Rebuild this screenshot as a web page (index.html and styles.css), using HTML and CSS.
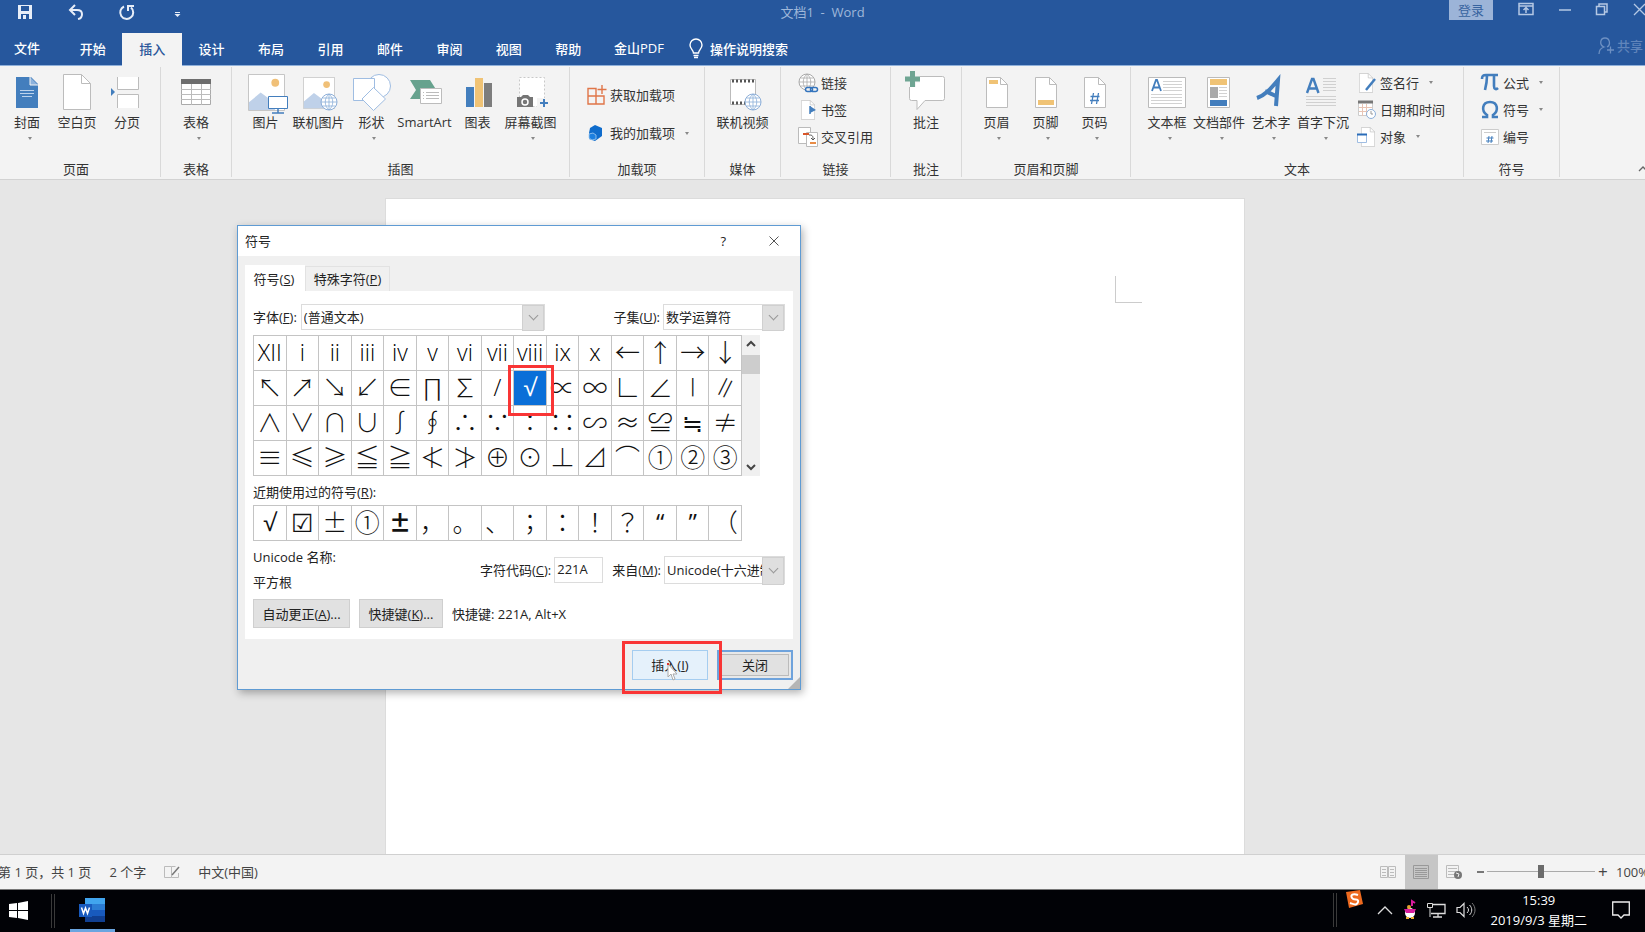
FILE: index.html
```html
<!DOCTYPE html>
<html lang="zh-CN">
<head>
<meta charset="utf-8">
<title>文档1 - Word</title>
<link rel="stylesheet" href="styles.css">
</head>
<body>
<svg class="defs" aria-hidden="true">
  <symbol id="page" viewBox="0 0 22 31"><path d="M.5.5h14l7 7v23H.5z" fill="#fff" stroke="#bcbcbc"/><path d="M14.500 .5v7h7" fill="none" stroke="#bcbcbc"/></symbol>
  <symbol id="globe" viewBox="0 0 18 18"><circle cx="9" cy="9" r="8" fill="#fff" stroke="currentColor"/><path d="M9 1v16M1 9h16M2.500 5h13M2.500 13h13M9 1c-5 4-5 12 0 16M9 1c5 4 5 12 0 16" fill="none" stroke="currentColor" stroke-width=".8"/></symbol>
  <symbol id="landscape" viewBox="0 0 38 38"><path d="M.5.5h37v37H.5z" fill="#fff" stroke="#c4c4c4"/><path d="M1 29l12-10 8 6 7 12H1z" fill="#bfd1e9"/><circle cx="28" cy="9" r="4" fill="#f0c078"/></symbol>
</svg>
<div class="app">
  <header class="titlebar">
    <div class="quick">
      <button aria-label="保存"><svg width="16" height="16"><path d="M1 1h14v14H1z" fill="#e8eef8"/><path d="M4 2h8v5H4zM4 10h8v5H4z" fill="#26579d"/><path d="M6 11h3v4H6z" fill="#e8eef8"/></svg></button>
      <button aria-label="撤消"><svg width="16" height="16"><path d="M2 6h7c7 0 6 8 1 9" fill="none" stroke="#e8eef8" stroke-width="2"/><path d="M7 1L2 6l5 5" fill="none" stroke="#e8eef8" stroke-width="2"/></svg></button>
      <button aria-label="重复"><svg width="16" height="16"><path d="M5 2.500A6.500 6.500 0 1 0 12 3.500" fill="none" stroke="#e8eef8" stroke-width="2"/><path d="M9 7V2h6" fill="none" stroke="#e8eef8" stroke-width="2"/></svg></button>
      <button aria-label="自定义"><svg width="16" height="16"><path d="M5 8.500h5" stroke="#e8eef8"/><path d="M4.500 10h6l-3 3z" fill="#e8eef8"/></svg></button>
    </div>
    <div class="doc-title">文档1&nbsp; - &nbsp;Word</div>
    <div class="window-tools">
      <button class="login">登录</button>
      <button aria-label="功能区显示选项"><svg width="16" height="14"><path d="M1 1.500h14v11H1zM1 4h14M8 11V6M5.500 8L8 5.500 10.500 8" fill="none" stroke="#b5c8e4" stroke-width="1.500"/></svg></button>
      <button aria-label="最小化"><svg width="12" height="14"><path d="M0 8h12" stroke="#b5c8e4" stroke-width="1.500"/></svg></button>
      <button aria-label="还原"><svg width="12" height="14"><path d="M.5 4.500h8v8h-8zM3 4V2h8v8H9" fill="none" stroke="#b5c8e4" stroke-width="1.500"/></svg></button>
      <button aria-label="关闭窗口"><svg width="14" height="14"><path d="M1 2l11 11M12 2L1 13" stroke="#b5c8e4" stroke-width="1.300"/></svg></button>
    </div>
  </header>
  <nav class="tabs">
    <button class="file">文件</button>
    <div class="tab-grid">
      <button>开始</button><button class="active">插入</button><button>设计</button><button>布局</button><button>引用</button><button>邮件</button><button>审阅</button><button>视图</button><button>帮助</button>
    </div>
    <button class="pdf">金山PDF</button>
    <button class="tell"><svg width="14" height="20"><path d="M4.500 14c0-3-3.500-4-3.500-8a6 6 0 0 1 12 0c0 4-3.500 5-3.500 8z" fill="none" stroke="#fff" stroke-width="1.400"/><path d="M4.500 16.500h5M5 18.500h4" stroke="#fff" stroke-width="1.300"/></svg>操作说明搜索</button>
    <button class="share"><svg width="17" height="18"><path d="M1 17c0-4 2-6 5-7-5-2-4-9 1-9s6 7 2 9M9 13h7M12.500 9.500v7" fill="none" stroke="#6d90c2" stroke-width="1.300"/></svg>共享</button>
  </nav>

  <section class="ribbon" aria-label="插入">
    <div class="group g-pages">
      <div class="items">
        <button class="big"><svg width="40" height="42"><path d="M9 5h15l7 7v24H9z" fill="#437ebd"/><path d="M23 5v8h8" fill="#8db2dc" stroke="#f3f3f3"/><path d="M13 18.500h14M13 21.500h14M15 24.500h10" stroke="#bdd3ec"/></svg><span>封面</span><i class="arrow"></i></button>
        <button class="big"><svg width="40" height="42"><path d="M6.500 2.500h18l9 9v26h-27z" fill="#fff" stroke="#bcbcbc"/><path d="M24.500 2.500v9h9" fill="none" stroke="#bcbcbc"/></svg><span>空白页</span></button>
        <button class="big"><svg width="40" height="42"><path d="M10.500 5v12.500h21V5M10.500 36V22.500h21V36" fill="#fff" stroke="#bcbcbc"/><path d="M4 16l4 4-4 4z" fill="#437ebd"/></svg><span>分页</span></button>
      </div>
      <div class="caption">页面</div>
    </div>
    <div class="group g-table">
      <div class="items">
        <button class="big"><svg width="40" height="42"><path d="M5.500 7.500h29v25h-29z" fill="#fff" stroke="#aaa"/><path d="M5 7h30v5H5z" fill="#6e6e6e"/><path d="M5 17.500h30M5 22.500h30M5 27.500h30M15.500 12v21M25.500 12v21" stroke="#bbb"/></svg><span>表格</span><i class="arrow"></i></button>
      </div>
      <div class="caption">表格</div>
    </div>
    <div class="group g-illus">
      <div class="items">
        <button class="big"><svg width="40" height="42"><use href="#landscape" x="2" y="2" width="37" height="37"/><path d="M22.500 24.500h19v12h-19z" fill="#fff" stroke="#437ebd"/><path d="M32 37v4M26 41h12" stroke="#437ebd" stroke-width="1.500"/></svg><span>图片</span></button>
        <button class="big"><svg width="40" height="42"><use href="#landscape" x="4" y="5" width="32" height="32"/><use href="#globe" x="21" y="21" width="18" height="18" color="#8caed8"/></svg><span>联机图片</span></button>
        <button class="big"><svg width="40" height="42"><circle cx="27" cy="14" r="11.500" fill="#fff" stroke="#9fbde2"/><path d="M1.500 6.500h21v22h-21z" fill="#fff" stroke="#9fbde2"/><path d="M21.500 15.500l12 11.500-12 11.500L10 27z" fill="#fff" stroke="#9fbde2"/></svg><span>形状</span><i class="arrow"></i></button>
        <button class="big"><svg width="40" height="42"><path d="M5 8h20l7 11-7 8H5l6-9z" fill="#67a28e"/><path d="M15.500 16.500h21v15h-21z" fill="#fff" stroke="#bcbcbc"/><path d="M18 20.500h1M21 20.500h13M18 23.500h1M21 23.500h13M18 26.500h1M21 26.500h13" stroke="#bbb"/></svg><span>SmartArt</span></button>
        <button class="big"><svg width="40" height="42"><path d="M8 15h8v20H8z" fill="#437ebd"/><path d="M17 6h8v29h-8z" fill="#f0c375"/><path d="M26 11h8v24h-8z" fill="#7d7d7d"/></svg><span>图表</span></button>
        <button class="big"><svg width="40" height="42"><path d="M8.500 5.500h25v29h-25z" fill="#fff" stroke="#c8c8c8" stroke-dasharray="2 2"/><path d="M6 25h4l2-2h5l2 2h3v10H6z" fill="#757575"/><circle cx="14" cy="30" r="3" fill="none" stroke="#fff" stroke-width="1.500"/><path d="M26 26h15v10H26z" fill="#f3f3f3"/><path d="M29 31h8M33 27v8" stroke="#437ebd" stroke-width="2"/></svg><span>屏幕截图</span><i class="arrow"></i></button>
      </div>
      <div class="caption">插图</div>
    </div>
    <div class="group g-addins">
      <div class="items small-list addins">
        <button class="small"><svg width="20" height="20"><path d="M1 3.500h8v7.500H1zM1 11h8v8H1zM9 11h8v8H9zM15 0v9M10.500 4.500h9" fill="none" stroke="#e07548" stroke-width="1.400"/></svg>获取加载项</button>
        <button class="small"><svg width="20" height="20"><path d="M8 2l7 3v8l-7 5-6-2v-6l1-5z" fill="#0f6ccc"/><path d="M2 11l4-1 3 2v4l-4 1-3-2z" fill="#1b7fe0" stroke="#a5cbf0" stroke-width=".8"/></svg>我的加载项<i class="arrow"></i></button>
      </div>
      <div class="caption">加载项</div>
    </div>
    <div class="group g-media">
      <div class="items">
        <button class="big"><svg width="40" height="42"><path d="M7.500 7.500h25v25h-25z" fill="#fff" stroke="#bbb"/><path d="M9 9h24M9 31h24" stroke="#555" stroke-width="3" stroke-dasharray="2 2"/><use href="#globe" x="21" y="21" width="18" height="18" color="#8caed8"/></svg><span>联机视频</span></button>
      </div>
      <div class="caption">媒体</div>
    </div>
    <div class="group g-links">
      <div class="items small-list">
        <button class="small"><svg width="20" height="20"><use href="#globe" x="0" y="0" width="18" height="18" color="#a9a9a9"/><path d="M7 14h13v6H7z" fill="#f3f3f3"/><rect x="7.500" y="14.500" width="7" height="4" rx="2" fill="none" stroke="#3474bd" stroke-width="1.500"/><rect x="12.500" y="14.500" width="7" height="4" rx="2" fill="none" stroke="#3474bd" stroke-width="1.500"/></svg>链接</button>
        <button class="small"><svg width="20" height="20"><use href="#page" x="3" y="0" width="14" height="20"/><path d="M12 6v8" stroke="#437ebd" stroke-width="1.500"/><path d="M12 6l6 4-6 3z" fill="#437ebd"/></svg>书签</button>
        <button class="small"><svg width="20" height="20"><path d="M.5.5h12v16H.5z" fill="#fff" stroke="#bbb"/><path d="M8.500 5.500h11v14h-11z" fill="#fff" stroke="#bbb"/><path d="M5 7h6" stroke="#d8562a" stroke-width="2"/><path d="M12 16h6" stroke="#e88c46" stroke-width="2"/><path d="M11 8c4 0 4 1 4 5m-2-2l2 2 2-2" fill="none" stroke="#555"/></svg>交叉引用</button>
      </div>
      <div class="caption">链接</div>
    </div>
    <div class="group g-comment">
      <div class="items">
        <button class="big"><svg width="40" height="42"><path d="M5.500 4.500h31a2 2 0 0 1 2 2v20a2 2 0 0 1-2 2H19l-8 9v-9H5.500a2 2 0 0 1-2-2v-20a2 2 0 0 1 2-2z" fill="#fff" stroke="#bcbcbc"/><path d="M-1 7h15M6.500-1v16" stroke="#f3f3f3" stroke-width="7"/><path d="M-1 7h15M6.500-1v16" stroke="#6fa593" stroke-width="5"/></svg><span>批注</span></button>
      </div>
      <div class="caption">批注</div>
    </div>
    <div class="group g-header">
      <div class="items">
        <button class="big"><svg width="40" height="42"><use href="#page" x="9" y="5" width="22" height="31"/><path d="M12 8h9v4h-9z" fill="#f0c375"/></svg><span>页眉</span><i class="arrow"></i></button>
        <button class="big"><svg width="40" height="42"><use href="#page" x="9" y="5" width="22" height="31"/><path d="M12 28h16v5H12z" fill="#f0c375"/></svg><span>页脚</span><i class="arrow"></i></button>
        <button class="big"><svg width="40" height="42"><use href="#page" x="9" y="5" width="22" height="31"/><path d="M18.500 21l-2 11M23.500 21l-2 11M15.500 24.500h9M15 28.500h9" stroke="#437ebd" stroke-width="1.300"/></svg><span>页码</span><i class="arrow"></i></button>
      </div>
      <div class="caption">页眉和页脚</div>
    </div>
    <div class="group g-text">
      <div class="items">
        <button class="big"><svg width="40" height="42"><path d="M1.500 5.500h37v30h-37z" fill="#fff" stroke="#bbb"/><path d="M16 9.500h19M16 12.500h19M16 15.500h19M16 18.500h19M4 22.500h31M4 25.500h31M4 28.500h31M4 31.500h31" stroke="#d2d2d2"/><path d="M5 19l4-11h1l4 11M6.500 15.500h6" fill="none" stroke="#437ebd" stroke-width="1.800"/></svg><span>文本框</span><i class="arrow"></i></button>
        <button class="big"><svg width="40" height="42"><path d="M8.500 5.500h22v30h-22z" fill="#fff" stroke="#bbb"/><path d="M11 7h17v6H11z" fill="#f0c375"/><path d="M11 15h8v11h-8z" fill="#aaa"/><path d="M20 15.500h8M20 18.500h8M20 21.500h8M20 24.500h8" stroke="#d2d2d2"/><path d="M11 28h17v6H11z" fill="#437ebd"/></svg><span>文档部件</span><i class="arrow"></i></button>
        <button class="big"><svg width="40" height="42"><path d="M6 26C15 23 21 15 27 8l-2 26M14 19l13 6" fill="none" stroke="#437ebd" stroke-width="4"/></svg><span>艺术字</span><i class="arrow"></i></button>
        <button class="big"><svg width="40" height="42"><path d="M20 6.500h13M20 9.500h13M20 12.500h13M20 15.500h13M20 18.500h13M3 24.500h30M3 27.500h30M3 30.500h30M3 33.500h30" stroke="#d0d0d0"/><path d="M4 21l5-14h1.500l5 14M6 16.500h8" fill="none" stroke="#437ebd" stroke-width="2.400"/></svg><span>首字下沉</span><i class="arrow"></i></button>
        <div class="small-list">
          <button class="small"><svg width="20" height="20"><use href="#page" x="2" y="0" width="14" height="20"/><path d="M9 17l9-11" stroke="#437ebd" stroke-width="2.500"/></svg>签名行<i class="arrow"></i></button>
          <button class="small"><svg width="20" height="20"><path d="M1.500 1.500h14v14h-14z" fill="#fff" stroke="#ccc"/><path d="M1 2h15" stroke="#777" stroke-width="3"/><path d="M5.500 4v12M9.500 4v12M2 7.500h13M2 11.500h13" stroke="#e8c4b4"/><circle cx="14" cy="14" r="4.500" fill="#fff" stroke="#8caed8"/><path d="M14 11v3h2" fill="none" stroke="#999"/></svg>日期和时间</button>
          <button class="small"><svg width="20" height="20"><use href="#page" x="4" y="0" width="14" height="20"/><path d="M.5 7.500h9v8h-9z" fill="#fff" stroke="#9fbde2"/><path d="M0 7.500h10" stroke="#2a6cb8" stroke-width="2"/></svg>对象<i class="arrow"></i></button>
        </div>
      </div>
      <div class="caption">文本</div>
    </div>
    <div class="group g-symbol">
      <div class="items small-list">
        <button class="small"><svg width="20" height="20"><path d="M2 6c0-3 1-4 4-4h12M7 3c0 6-1 10-2 14M14 3v10c0 3 2 4 4 2" fill="none" stroke="#437ebd" stroke-width="2.600"/></svg>公式<i class="arrow"></i></button>
        <button class="small"><svg width="20" height="20"><path d="M2 17h5v-2C1 11 2 2 10 2s9 9 3 13v2h5" fill="none" stroke="#437ebd" stroke-width="2.600"/></svg>符号<i class="arrow"></i></button>
        <button class="small"><svg width="20" height="20"><path d="M1.500 2.500h17v15h-17z" fill="#fff" stroke="#ccc"/><path d="M4 5.500h12" stroke="#ccc"/><path d="M9 9l-1 7M12 9l-1 7M6.500 11h7M6 14h7" stroke="#437ebd"/></svg>编号</button>
      </div>
      <div class="caption">符号</div>
    </div>
    <button class="collapse" aria-label="折叠功能区"><svg width="8" height="8"><path d="M1 6l4-4 4 4" fill="none" stroke="#666" stroke-width="1.300"/></svg></button>
  </section>

  <main class="workspace">
    <div class="sheet"><div class="margin-corner"></div></div>

    <div class="dialog" role="dialog" aria-labelledby="dlg-title">
      <div class="dialog-head">
        <span id="dlg-title">符号</span>
        <button class="help" aria-label="帮助说明">?</button>
        <button aria-label="关闭对话框"><svg width="10" height="10"><path d="M.5.5l9 9M9.500.5l-9 9" stroke="#555"/></svg></button>
      </div>
      <div class="dialog-body">
        <div class="dialog-tabs">
          <button class="on">符号(<u>S</u>)</button><button>特殊字符(<u>P</u>)</button>
        </div>
        <div class="panel">
          <div class="fields">
            <label for="font">字体(<u>F</u>):</label>
            <span class="combo font"><select id="font"><option>(普通文本)</option></select></span>
            <label for="subset" class="push">子集(<u>U</u>):</label>
            <span class="combo sub"><select id="subset"><option>数学运算符</option></select></span>
          </div>
          <div class="chart">
            <div class="symbols">
              <button class="roman">XII</button><button class="roman">i</button><button class="roman">ii</button><button class="roman">iii</button><button class="roman">iv</button><button class="roman">v</button><button class="roman">vi</button><button class="roman">vii</button><button class="roman">viii</button><button class="roman">ix</button><button class="roman">x</button><button>←</button><button>↑</button><button>→</button><button>↓</button>
              <button>↖</button><button>↗</button><button>↘</button><button>↙</button><button>∈</button><button>∏</button><button>∑</button><button class="roman">/</button><button class="picked latin">√</button><button>∝</button><button>∞</button><button>∟</button><button>∠</button><button>∣</button><button>∥</button>
              <button>∧</button><button>∨</button><button>∩</button><button>∪</button><button>∫</button><button>∮</button><button>∴</button><button>∵</button><button>∶</button><button>∷</button><button>∽</button><button>≈</button><button>≌</button><button>≒</button><button>≠</button>
              <button>≡</button><button>≤</button><button>≥</button><button>≦</button><button>≧</button><button>≮</button><button>≯</button><button>⊕</button><button>⊙</button><button>⊥</button><button>⊿</button><button>⌒</button><button>①</button><button>②</button><button>③</button>
            </div>
            <div class="scroll">
              <svg width="10" height="8"><path d="M1 6l4-4 4 4" fill="none" stroke="#444" stroke-width="2"/></svg>
              <span class="thumb"></span>
              <svg class="down" width="10" height="8"><path d="M1 2l4 4 4-4" fill="none" stroke="#444" stroke-width="2"/></svg>
            </div>
          </div>
          <div class="recent-label">近期使用过的符号(<u>R</u>):</div>
          <div class="symbols recent">
            <button class="latin">√</button><button>☑</button><button>±</button><button>①</button><button class="bold">±</button><button>，</button><button>。</button><button>、</button><button class="mid">；</button><button class="mid">：</button><button class="mid">！</button><button class="mid">？</button><button class="latin">“</button><button class="latin">”</button><button>（</button>
          </div>
          <div class="info">
            <div class="name"><div>Unicode 名称:</div><div>平方根</div></div>
            <label for="code">字符代码(<u>C</u>):</label>
            <input id="code" value="221A">
            <label for="from" class="from">来自(<u>M</u>):</label>
            <span class="combo src"><select id="from"><option>Unicode(十六进制)</option></select></span>
          </div>
          <div class="actions">
            <button class="btn auto">自动更正(<u>A</u>)...</button>
            <button class="btn keys">快捷键(<u>K</u>)...</button>
            <span>快捷键: 221A, Alt+X</span>
          </div>
        </div>
        <div class="dialog-foot">
          <button class="btn insert">插入(<u>I</u>)<svg class="cursor" width="10" height="18"><path d="M1 2v13l3-3 2 6 2-1-2-5h4z" fill="#fff" stroke="#aaa"/><path d="M0 1h2v2H0z" fill="#d33"/></svg></button>
          <button class="btn close">关闭</button>
        </div>
      </div>
      <svg class="grip" width="12" height="12"><path d="M12 0v12H0z" fill="#b5b5b5"/></svg>
      <div class="mark mark-symbol"></div>
      <div class="mark mark-insert"></div>
    </div>
  </main>

  <footer class="status">
    <span class="pages">第 1 页，共 1 页</span><span>2 个字</span>
    <svg width="16" height="14"><path d="M.5 1.500h7v11h-7zM7.500 1.500h4M7.500 12.500h7V8" fill="none" stroke="#bbb"/><path d="M8 10l7-8" stroke="#777" stroke-width="1.500"/></svg>
    <span>中文(中国)</span>
    <div class="views">
      <button aria-label="阅读视图"><svg width="16" height="14"><path d="M.5 1.500h7v11h-7zM8.500 1.500h7v11h-7zM2 4.500h4M2 7.500h4M2 10.500h4M10 4.500h4M10 7.500h4M10 10.500h4" fill="none" stroke="#bcbcbc"/></svg></button>
      <button class="current" aria-label="页面视图"><svg width="16" height="14"><path d="M.5.5h15v13H.5zM2 3.500h12M2 5.500h12M2 7.500h12M2 9.500h12M2 11.500h12" fill="none" stroke="#999"/></svg></button>
      <button aria-label="Web 版式"><svg width="16" height="14"><path d="M.5.5h12v12H.5zM2 3.500h9M2 6.500h9M2 9.500h6" fill="none" stroke="#bcbcbc"/><circle cx="12" cy="10" r="4" fill="#777"/><path d="M10 8l3 1-1 3" fill="none" stroke="#eee"/></svg></button>
      <span class="minus"></span><input type="range" aria-label="缩放" min="0" max="100" value="50"><span class="plus">+</span><span class="zoom">100%</span>
    </div>
  </footer>

  <div class="taskbar">
    <button class="start" aria-label="开始菜单"><svg width="19" height="19"><path d="M0 3l8-1v7H0zM9 2l10-2v9H9zM0 10h8v7l-8-1zM9 10h10v9L9 17z" fill="#fff"/></svg></button>
    <span class="bars"></span>
    <button class="task" aria-label="Word"><svg width="26" height="24"><path d="M6 0h20v6H6z" fill="#41a5ee"/><path d="M6 6h20v6H6z" fill="#2b7cd3"/><path d="M6 12h20v6H6z" fill="#185abd"/><path d="M6 18h20v6H6z" fill="#103f91"/><path d="M0 6h13v13H0z" fill="#185abd"/><path d="M2.500 9.500l2 6 2-5.500 2 5.500 2-6" fill="none" stroke="#fff" stroke-width="1.500"/></svg></button>
    <div class="tray">
      <span class="bars"></span>
      <svg class="sogou" width="18" height="18"><path d="M1 2l14-2 3 14-14 4z" fill="#ee6a1f"/><path d="M13 5C8 3 5 5 7 8s7 0 6 4-5 2-8 1" fill="none" stroke="#fff" stroke-width="2"/></svg>
      <svg width="16" height="10"><path d="M1 9l7-7 7 7" fill="none" stroke="#ddd" stroke-width="1.300"/></svg>
      <svg width="14" height="18"><circle cx="7" cy="12" r="5" fill="#fff"/><path d="M3 17h3M8 17h3" stroke="#f0b030" stroke-width="2"/><path d="M1 8h12l-2 4H3z" fill="#d81b9c"/><path d="M9 5V0l3 2" stroke="#d81b9c" stroke-width="2" fill="none"/><circle cx="6" cy="6" r="2" fill="#e8a030"/></svg>
      <svg width="19" height="16"><path d="M4 2.500h14v9H4M11 12v3M6 15h9" fill="none" stroke="#ddd" stroke-width="1.300"/><path d="M.5 1.500h5v4h-5zM3 6v9" fill="#000" stroke="#ddd"/></svg>
      <svg width="20" height="16"><path d="M1 5.500h3l4-4v13l-4-4H1z" fill="none" stroke="#ddd" stroke-width="1.200"/><path d="M11 5c2 2 2 4 0 6M13.500 3c3 3 3 7 0 10" fill="none" stroke="#ddd"/><path d="M16 1c4 4 4 10 0 14" fill="none" stroke="#777"/></svg>
      <div class="clock"><div>15:39</div><div>2019/9/3 星期二</div></div>
      <svg class="note" width="18" height="18"><path d="M.7 1h16.600v13H12l-3 3-3-3H.7z" fill="none" stroke="#eee" stroke-width="1.300"/></svg>
    </div>
  </div>
</div>
</body>
</html>
```
FILE: styles.css
```css
* { box-sizing: border-box; }
body { margin: 0; font: 13px/18px "Open Sans", "Noto Sans CJK SC", sans-serif; color: #333; overflow: hidden; }
button, input, select { font: inherit; color: inherit; border: 0; background: none; padding: 0; margin: 0; white-space: nowrap; }
svg { display: block; flex: none; overflow: visible; }
.defs { position: absolute; width: 0; height: 0; }
.app { display: flex; flex-direction: column; height: 100vh; overflow: hidden; }

.titlebar { display: grid; grid-template-columns: 1fr auto 1fr; height: 33px; background: #26579d; color: #9fb7da; }
.quick { display: flex; gap: 35px; padding: 4px 0 0 17px; align-items: flex-start; }
.doc-title { padding-top: 3px; }
.window-tools { display: flex; justify-content: flex-end; align-items: flex-start; }
.window-tools button { margin-right: 25px; padding-top: 2px; }
.window-tools button:last-child { margin-right: -2px; }
.window-tools .login { width: 44px; height: 20px; padding: 0; background: #9cb4d8; color: #37639f; }

.tabs { display: flex; height: 33px; background: #26579d; color: #fff; border-bottom: 1px solid #8fb0da; font-weight: 500; }
.tabs button { padding-bottom: 2px; }
.tabs .file { width: 63px; padding-right: 9px; }
.tab-grid { display: grid; grid-template-columns: repeat(9, 1fr); width: 535px; }
.tab-grid .active { background: #f3f3f3; color: #2b579a; height: 33px; }
.tabs .pdf { padding: 0 16px 2px; }
.tabs .tell { display: flex; align-items: center; gap: 7px; padding: 0 9px 1px; }
.share { display: flex; align-items: center; gap: 2px; margin: 0 2px 4px auto; color: #6085bb; }

.ribbon { display: flex; height: 114px; padding: 1px 0 2px; background: #f3f3f3; border-bottom: 1px solid #d2d2d2; }
.group { display: flex; flex-direction: column; border-right: 1px solid #d9d9d9; flex: none; }
.items { display: flex; flex: 1; }
.caption { text-align: center; height: 16px; line-height: 16px; }
.big { display: flex; flex-direction: column; align-items: center; width: 53px; padding-top: 5px; }
.big span { line-height: 16px; }
.arrow { width: 0; height: 0; border: 2px solid transparent; border-top: 3px solid #888; border-bottom: 0; }
.big .arrow { margin: 7px 0 0 5px; }
.small-list { display: flex; flex-direction: column; padding-top: 2px; }
.small { display: flex; align-items: center; gap: 3px; height: 27px; }
.small .arrow { margin-left: 7px; }
.g-pages { width: 161px; } .g-pages .items { padding-left: 2px; } .g-pages .big { width: 50px; } .g-pages .caption { padding-right: 8px; }
.g-table { width: 71px; } .g-table .items { justify-content: center; }
.g-illus { width: 338px; } .g-illus .items { padding-left: 7px; }
.g-addins { width: 135px; } .addins { padding: 9px 0 0 17px; } .addins .small { height: 38px; }
.g-media { width: 76px; } .g-media .items { justify-content: center; }
.g-links { width: 110px; } .g-links .items { padding-left: 17px; }
.g-comment { width: 71px; } .g-comment .items { justify-content: center; }
.g-header { width: 169px; } .g-header .items { padding-left: 10px; } .g-header .big { width: 49px; }
.g-text { width: 333px; } .g-text .items { padding-left: 10px; } .g-text .big { width: 52px; } .g-text .small-list { padding-left: 8px; }
.g-symbol { width: 96px; } .g-symbol .items { padding-left: 16px; }
.collapse { margin: auto -1px 4px auto; }

.workspace { flex: 1; position: relative; background: #e6e6e6; padding: 18px 16px 0 0; border-bottom: 1px solid #d0d0d0; }
.sheet { width: 860px; max-width: 100%; height: 100%; margin: 0 auto; background: #fff; border: 1px solid #dcdcdc; border-bottom: 0; display: flex; justify-content: flex-end; padding: 77px 102px 0 0; }
.margin-corner { width: 27px; height: 27px; border: solid #ccc; border-width: 0 0 1px 1px; }

.dialog { position: absolute; left: 237px; top: 45px; width: 564px; background: #f0f0f0; border: 1px solid #5f9bd3; box-shadow: 2px 3px 8px rgba(0,0,0,.3); color: #222; }
.dialog-head { display: flex; align-items: center; height: 30px; padding: 0 21px 0 7px; background: #fff; }
.help { margin: 0 43px 0 auto; }
.dialog-body { padding: 9px 7px 9px; }
.dialog-tabs { display: flex; align-items: flex-end; }
.dialog-tabs button { height: 25px; border: 1px solid #e2e2e2; border-bottom: 0; width: 85px; }
.dialog-tabs .on { height: 26px; width: 60px; background: #fff; border-color: #fff; padding-right: 2px; }
.panel { background: #fff; padding: 12px 8px 11px 8px; height: 348px; }
.fields { display: flex; align-items: center; height: 27px; }
.fields label { flex: none; }
.combo { position: relative; display: flex; height: 26px; border: 1px solid #dcdcdc; background: #fff; }
.combo select { appearance: none; width: 100%; padding: 0 19px 0 2px; overflow: hidden; }
.combo::before { content: ""; position: absolute; right: 0; top: 0; width: 20px; height: 100%; background: #dfdfdf; border: 1px solid #d0d0d0; pointer-events: none; }
.combo::after { content: ""; position: absolute; right: 7px; top: 7px; width: 6px; height: 6px; border: solid #999; border-width: 0 1px 1px 0; transform: rotate(45deg); pointer-events: none; }
.font { width: 244px; margin-left: 4px; }
.push { margin-left: auto; }
.sub { width: 122px; margin-left: 3px; }
.chart { display: flex; margin-top: 5px; }
.symbols { display: grid; grid-template-columns: repeat(15, 1fr); width: 489px; border: solid #c4c4c4; border-width: 1px 0 0 1px; }
.symbols button { height: 35px; min-width: 0; border: solid #c4c4c4; border-width: 0 1px 1px 0; padding-bottom: 5px; font: 300 25px/28px "Noto Sans CJK SC", sans-serif; color: #111; display: flex; align-items: center; justify-content: center; }
.symbols .roman { font: 300 23px/28px "Open Sans", sans-serif; padding-bottom: 2px; color: #000; }
.symbols .latin { font: 400 24px/28px "Open Sans", sans-serif; padding-bottom: 2px; }
.symbols .mid { font-family: "Noto Sans CJK TC", sans-serif; }
.symbols .picked { background: #0a6fd8; color: #fff; }
.symbols .bold { font-weight: 900; font-size: 22px; }
.scroll { width: 18px; background: #f0f0f0; display: flex; flex-direction: column; align-items: center; padding: 5px 0; }
.thumb { width: 18px; height: 19px; margin-top: 7px; background: #cdcdcd; }
.down { margin-top: auto; }
.recent-label { margin: 7px 0 4px; }
.info { display: flex; align-items: center; margin-top: 4px; height: 50px; }
.name { flex: 1; line-height: 25px; }
.info input { width: 49px; height: 26px; border: 1px solid #dcdcdc; padding: 0 2px 2px; margin-left: 3px; }
.from { margin-left: 9px; }
.src { width: 121px; height: 28px; margin-left: 3px; }
.src::after { top: 8px; }
.actions { display: flex; align-items: center; margin-top: 4px; gap: 9px; }
.btn { height: 29px; background: #e1e1e1; border: 1px solid #cfcfcf; }
.auto { width: 97px; }
.keys { width: 84px; }
.dialog-foot { display: flex; justify-content: flex-end; gap: 9px; padding-top: 11px; }
.dialog-foot .btn { width: 76px; height: 30px; }
.insert { position: relative; background: #e5f1fb; border-color: #a5cdf0; }
.cursor { position: absolute; left: 34px; top: 11px; }
.dialog-foot .close { border: 2px solid #6fa3dc; box-shadow: inset 0 0 0 2px #e8e8e8, inset 0 0 0 3px #bbb; }
.grip { position: absolute; right: 0; bottom: 0; }
.mark { position: absolute; border: 3px solid #f93535; pointer-events: none; }
.mark-symbol { left: 270px; top: 139px; width: 46px; height: 51px; }
.mark-insert { left: 384px; top: 415px; width: 100px; height: 53px; }

.status { display: flex; align-items: center; gap: 18px; height: 34px; padding-bottom: 1px; background: #f3f3f3; color: #444; }
.pages { margin-left: -2px; }
.views { display: flex; align-items: center; height: 34px; margin: 0 -4px 0 auto; }
.views button { width: 33px; height: 100%; display: flex; align-items: center; justify-content: center; }
.views .current { background: #c6c6c6; }
.minus { width: 7px; height: 2px; background: #777; margin: 0 3px 0 6px; }
.views input { appearance: none; width: 108px; height: 14px; background: linear-gradient(#aaa, #aaa) center / 100% 1px no-repeat; }
.views input::-webkit-slider-thumb { appearance: none; width: 6px; height: 13px; background: #6b6b6b; }
.plus { font-size: 17px; width: 16px; text-align: center; }
.zoom { margin-left: 5px; }

.taskbar { display: flex; align-items: center; height: 43px; background: #010206; color: #fff; border-top: 1px solid #777; overflow: hidden; }
.start { margin: 0 23px 0 9px; padding-bottom: 1px; }
.bars { width: 4px; height: 34px; border: solid #3a3a3a; border-width: 0 1px; }
.task { display: flex; align-items: flex-start; margin-left: 15px; width: 45px; height: 42px; padding: 8px 0 0 9px; border-bottom: 3px solid #6aa5e0; }
.tray { display: flex; align-items: center; margin-left: auto; height: 100%; padding-bottom: 2px; }
.sogou { margin: 0 14px 22px 8px; }
.tray svg + svg { margin-right: 10px; }
.clock { text-align: center; line-height: 20px; margin-left: 4px; }
.tray .note { margin: 0 15px 0 25px; }
```
